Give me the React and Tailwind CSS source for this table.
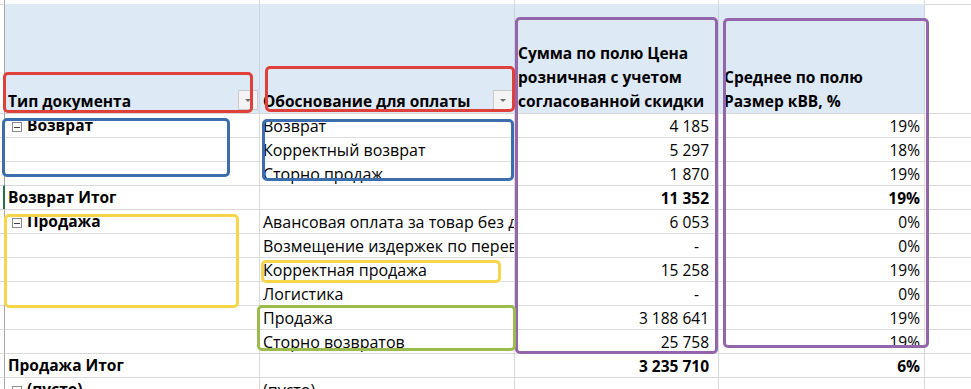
import React from "react";

const GRID = "border-[#d9d9d9]";

function Collapse() {
  return (
    <span className="inline-flex w-[10px] h-[10px] border border-[#8c8c8c] bg-white items-center justify-center mr-[5px] mb-[5px] shrink-0">
      <span className="block w-[6px] h-[1px] bg-[#404040]" />
    </span>
  );
}

function DropBtn() {
  return (
    <span className="w-[20px] h-[20px] border border-[#c8c8c8] bg-[#f4f4f4] flex items-center justify-center mb-[3px] mr-[1px] shrink-0">
      <svg width="8" height="5" viewBox="0 0 8 5">
        <path d="M1 1 L7 1 L4 4 Z" fill="#707070" />
      </svg>
    </span>
  );
}

const rows = [
  { c1: "Возврат", icon: true, c2: "Возврат", v: "4 185", p: "19%", line: "blue" },
  { c2: "Корректный возврат", v: "5 297", p: "18%", line: "gray" },
  { c2: "Сторно продаж", v: "1 870", p: "19%", line: "gray" },
  { c1: "Возврат Итог", v: "11 352", p: "19%", bold: true, line: "blue", sel: true },
  { c1: "Продажа", icon: true, c2: "Авансовая оплата за товар без дополнительных условий", v: "6 053", p: "0%", line: "blue" },
  { c2: "Возмещение издержек по перевозке", v: "-", p: "0%", line: "gray", dash: true },
  { c2: "Корректная продажа", v: "15 258", p: "19%", line: "gray" },
  { c2: "Логистика", v: "-", p: "0%", line: "gray", dash: true },
  { c2: "Продажа", v: "3 188 641", p: "19%", line: "gray" },
  { c2: "Сторно возвратов", v: "25 758", p: "19%", line: "gray" },
  { c1: "Продажа Итог", v: "3 235 710", p: "6%", bold: true, line: "blue" },
  { c1: "(пусто)", icon: true, c2: "(пусто)", v: "", p: "", line: "blue" },
];

function Row({ r }) {
  const lc = r.line === "blue" ? "border-[#9bb7da]" : "border-[#dcdcdc]";
  return (
    <div className="flex h-[24px] shrink-0">
      <div className={`w-[5px] shrink-0 border-t ${GRID} ${r.sel ? "border-r-2 border-r-[#217346]" : "border-r border-r-[#a6a6a6]"}`} />
      <div className={`w-[255px] shrink-0 border-t ${lc} border-r ${GRID} flex items-end pl-[3px] overflow-hidden whitespace-nowrap leading-[23px] font-bold text-[15.5px]`}>
        {r.icon ? <span className="w-[4px] shrink-0" /> : null}
        {r.icon ? <Collapse /> : null}
        {r.c1 || ""}
      </div>
      <div className={`w-[255px] shrink-0 border-t ${lc} border-r ${GRID} flex items-end pl-[3px] overflow-hidden whitespace-nowrap leading-[22px] text-[16px]`}>
        {r.c2 || ""}
      </div>
      <div className={`w-[204px] shrink-0 border-t ${lc} border-r ${GRID} flex items-end justify-end whitespace-nowrap leading-[22px] text-[15.5px] ${r.bold ? "font-bold" : ""} ${r.dash ? "pr-[19px]" : "pr-[9px]"}`}>
        {r.v}
      </div>
      <div className={`w-[206px] shrink-0 border-t ${lc} border-r ${GRID} flex items-end justify-end pr-[4px] whitespace-nowrap leading-[22px] text-[15.5px] ${r.bold ? "font-bold" : ""}`}>
        {r.p}
      </div>
      <div className={`flex-1 border-t ${GRID}`} />
    </div>
  );
}

export default function App() {
  return (
    <div
      className="relative w-[971px] h-[389px] overflow-hidden bg-white text-black"
      style={{ fontFamily: "'Open Sans', 'Noto Sans', sans-serif" }}
    >
      {/* top strip */}
      <div className="flex h-[4px]">
        <div className="w-[5px] border-r border-r-[#a6a6a6]" />
        <div className={`w-[255px] border-r ${GRID}`} />
        <div className={`w-[255px] border-r ${GRID}`} />
        <div className={`w-[204px] border-r ${GRID}`} />
        <div className={`w-[206px] border-r ${GRID}`} />
        <div className="flex-1" />
      </div>
      {/* header */}
      <div className="flex h-[109px] font-bold leading-[24px] text-[15.5px]">
        <div className={`w-[5px] border-t ${GRID} border-r border-r-[#a6a6a6]`} />
        <div className="w-[255px] bg-[#dde9f5] border-t border-[#dde9f5] border-r border-r-[#c9d3df] flex items-end pl-[3px]">
          <span className="flex-1 whitespace-nowrap">Тип документа</span>
          <DropBtn />
        </div>
        <div className="w-[255px] bg-[#dde9f5] border-t border-[#dde9f5] border-r border-r-[#c9d3df] flex items-end pl-[3px]">
          <span className="flex-1 whitespace-nowrap">Обоснование для оплаты</span>
          <DropBtn />
        </div>
        <div className="w-[204px] bg-[#dde9f5] border-t border-[#dde9f5] border-r border-r-[#c9d3df] flex flex-col justify-end pl-[3px] whitespace-nowrap">
          <span>Сумма по полю Цена</span>
          <span>розничная с учетом</span>
          <span>согласованной скидки</span>
        </div>
        <div className="w-[206px] bg-[#dde9f5] border-t border-[#dde9f5] border-r border-r-[#c9d3df] flex flex-col justify-end pl-[5px] whitespace-nowrap">
          <span>Среднее по полю</span>
          <span>Размер кВВ, %</span>
        </div>
        <div className={`flex-1 border-t ${GRID}`} />
      </div>
      {rows.map((r, i) => (
        <Row key={i} r={r} />
      ))}

      {/* annotations */}
      <div className="absolute left-[3px] top-[72px] w-[250px] h-[41px] border-[3px] border-[#e0403a] rounded-[5px]" />
      <div className="absolute left-[265px] top-[66px] w-[250px] h-[46px] border-[3px] border-[#e0403a] rounded-[5px]" />
      <div className="absolute left-[2px] top-[118px] w-[228px] h-[59px] border-[3px] border-[#3c6eae] rounded-[5px]" />
      <div className="absolute left-[262px] top-[119px] w-[252px] h-[62px] border-[3px] border-[#3c6eae] rounded-[5px]" />
      <div className="absolute left-[515px] top-[17px] w-[203px] h-[337px] border-[3px] border-[#9565ab] rounded-[5px]" />
      <div className="absolute left-[723px] top-[18px] w-[206px] h-[330px] border-[3px] border-[#9565ab] rounded-[5px]" />
      <div className="absolute left-[4px] top-[214px] w-[235px] h-[94px] border-[3px] border-[#f7d54a] rounded-[5px]" />
      <div className="absolute left-[261px] top-[260px] w-[240px] h-[23px] border-[3px] border-[#f7d54a] rounded-[5px]" />
      <div className="absolute left-[257px] top-[305px] w-[259px] h-[46px] border-[3px] border-[#9bbb4f] rounded-[5px]" />
    </div>
  );
}
